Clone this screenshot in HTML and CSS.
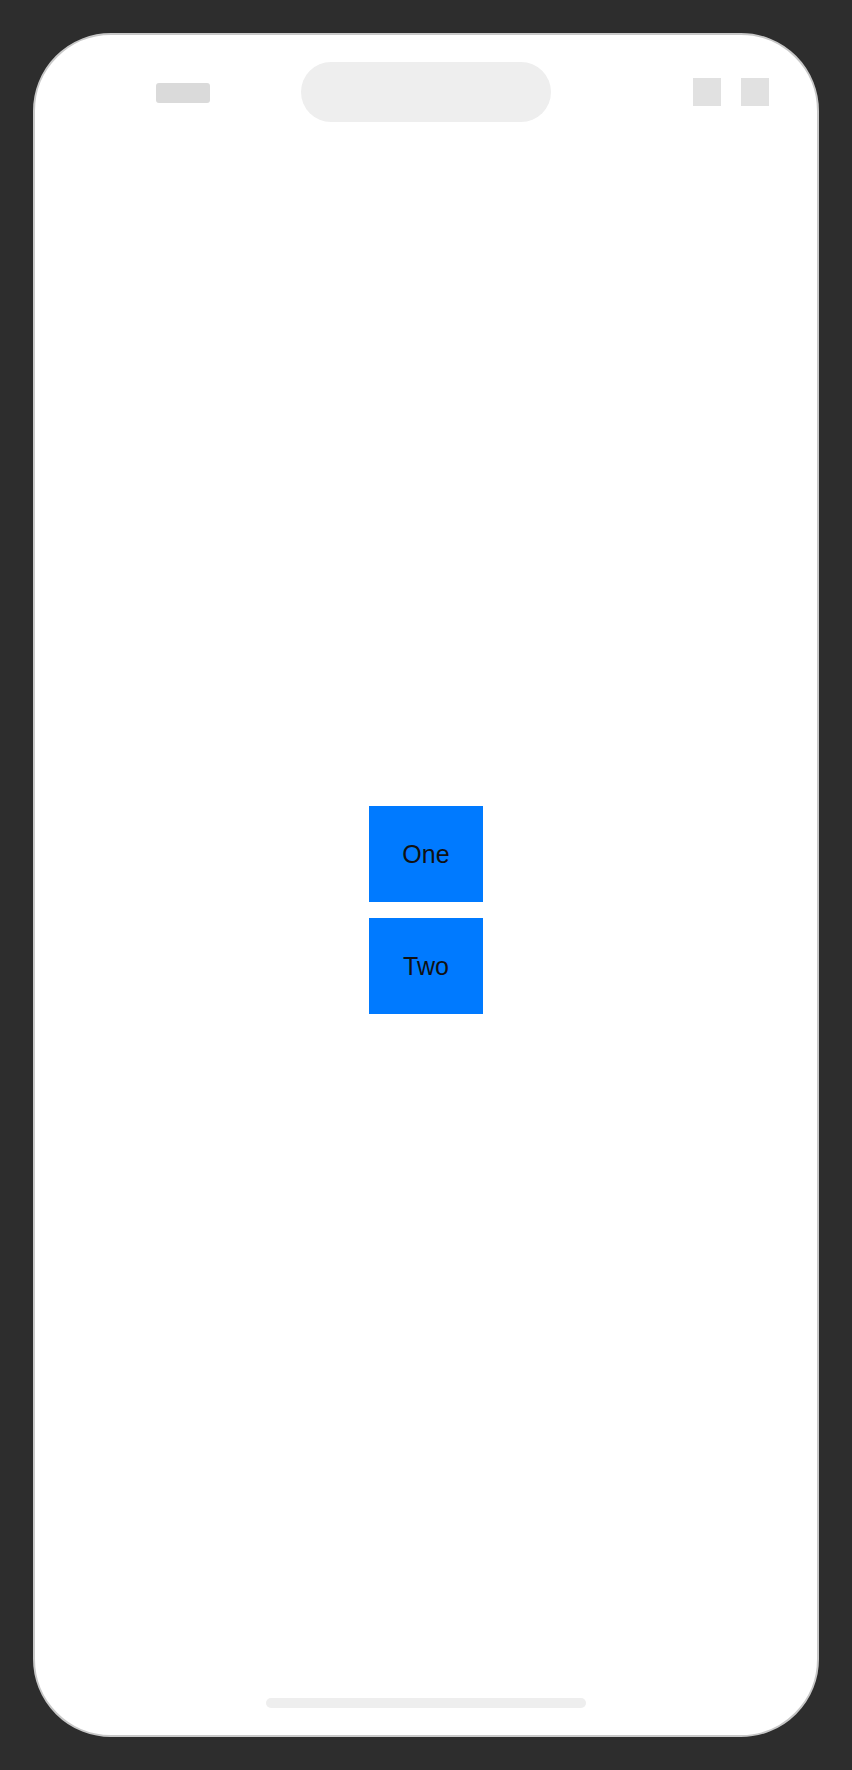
FILE: index.html
```html
<!DOCTYPE html>
<html lang="en">
<head>
<meta charset="utf-8">
<title>Phone</title>
<link rel="stylesheet" href="styles.css">
</head>
<body>
  <div class="phone">
    <div class="status">
      <div class="status-left"><span class="time-pill"></span></div>
      <div class="island"></div>
      <div class="status-right"><span class="sq"></span><span class="sq"></span></div>
    </div>
    <main class="content">
      <div class="box">One</div>
      <div class="box">Two</div>
    </main>
    <div class="home"></div>
  </div>
</body>
</html>
```

FILE: styles.css
```css
html, body {
  margin: 0;
  padding: 0;
  background: #2d2d2d;
}
body {
  width: 852px;
  height: 1770px;
  padding: 33px;
  box-sizing: border-box;
  font-family: "Liberation Sans", Arial, sans-serif;
}
.phone {
  width: 786px;
  height: 1704px;
  box-sizing: border-box;
  background: #fff;
  border: 2px solid #c8c8c8;
  border-radius: 78px;
  display: flex;
  flex-direction: column;
  padding: 27px 0;
  overflow: hidden;
}
.status {
  height: 60px;
  display: grid;
  grid-template-columns: 1fr 250px 1fr;
  align-items: center;
}
.status-left {
  display: flex;
  align-items: center;
  padding-left: 121px;
}
.time-pill {
  width: 54px;
  height: 20px;
  border-radius: 3px;
  background: #dadada;
  margin-top: 2px;
}
.island {
  height: 60px;
  border-radius: 30px;
  background: #eeeeee;
}
.status-right {
  display: flex;
  justify-content: flex-end;
  gap: 20px;
  padding-right: 48px;
}
.sq {
  width: 28px;
  height: 28px;
  background: #e1e1e1;
}
.content {
  flex: 1;
  display: flex;
  flex-direction: column;
  align-items: center;
  justify-content: center;
  gap: 16px;
}
.box {
  width: 114px;
  height: 96px;
  background: #007aff;
  color: #111;
  font-size: 25px;
  display: flex;
  align-items: center;
  justify-content: center;
}
.home {
  width: 320px;
  height: 10px;
  border-radius: 5px;
  background: #eeeeee;
  align-self: center;
}
```
